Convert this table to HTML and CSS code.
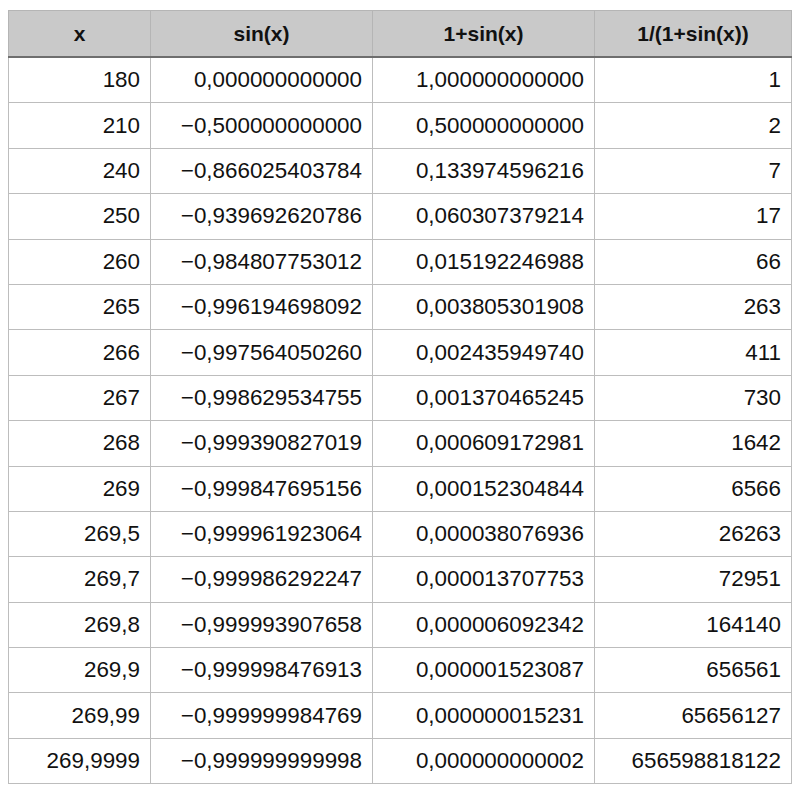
FILE: index.html
```html
<!DOCTYPE html>
<html>
<head>
<meta charset="utf-8">
<link rel="stylesheet" href="styles.css">
</head>
<body>
<table class="grid">
<colgroup><col class="c1"><col class="c2"><col class="c3"><col class="c4"></colgroup>
<thead>
<tr><th>x</th><th>sin(x)</th><th>1+sin(x)</th><th>1/(1+sin(x))</th></tr>
</thead>
<tbody>
<tr><td>180</td><td>0,000000000000</td><td>1,000000000000</td><td>1</td></tr>
<tr><td>210</td><td>−0,500000000000</td><td>0,500000000000</td><td>2</td></tr>
<tr><td>240</td><td>−0,866025403784</td><td>0,133974596216</td><td>7</td></tr>
<tr><td>250</td><td>−0,939692620786</td><td>0,060307379214</td><td>17</td></tr>
<tr><td>260</td><td>−0,984807753012</td><td>0,015192246988</td><td>66</td></tr>
<tr><td>265</td><td>−0,996194698092</td><td>0,003805301908</td><td>263</td></tr>
<tr><td>266</td><td>−0,997564050260</td><td>0,002435949740</td><td>411</td></tr>
<tr><td>267</td><td>−0,998629534755</td><td>0,001370465245</td><td>730</td></tr>
<tr><td>268</td><td>−0,999390827019</td><td>0,000609172981</td><td>1642</td></tr>
<tr><td>269</td><td>−0,999847695156</td><td>0,000152304844</td><td>6566</td></tr>
<tr><td>269,5</td><td>−0,999961923064</td><td>0,000038076936</td><td>26263</td></tr>
<tr><td>269,7</td><td>−0,999986292247</td><td>0,000013707753</td><td>72951</td></tr>
<tr><td>269,8</td><td>−0,999993907658</td><td>0,000006092342</td><td>164140</td></tr>
<tr><td>269,9</td><td>−0,999998476913</td><td>0,000001523087</td><td>656561</td></tr>
<tr><td>269,99</td><td>−0,999999984769</td><td>0,000000015231</td><td>65656127</td></tr>
<tr><td>269,9999</td><td>−0,999999999998</td><td>0,000000000002</td><td>656598818122</td></tr>
</tbody>
</table>
</body>
</html>
```
FILE: styles.css
```css
html, body {
  margin: 0;
  padding: 0;
  background: #ffffff;
}
body {
  padding: 10px 0 0 8px;
  font-family: "Liberation Sans", Arial, sans-serif;
  color: #111111;
}
.grid {
  border-collapse: collapse;
  table-layout: fixed;
  width: 783px;
  font-size: 22.4px;
}
.c1 { width: 142px; }
.c2 { width: 222px; }
.c3 { width: 222px; }
.c4 { width: 197px; }
.grid th, .grid td {
  border: 1px solid #bdbdbd;
  padding: 0 10px 0 4px;
  white-space: nowrap;
}
.grid th {
  background: #c9c9c9;
  height: 45px;
  font-size: 21px;
  font-weight: bold;
  text-align: center;
  padding: 0 6px;
  border-color: #b5b5b5;
  border-bottom: 2px solid #6e6e6e;
}
.grid td {
  height: 44.4px;
  text-align: right;
}
```
